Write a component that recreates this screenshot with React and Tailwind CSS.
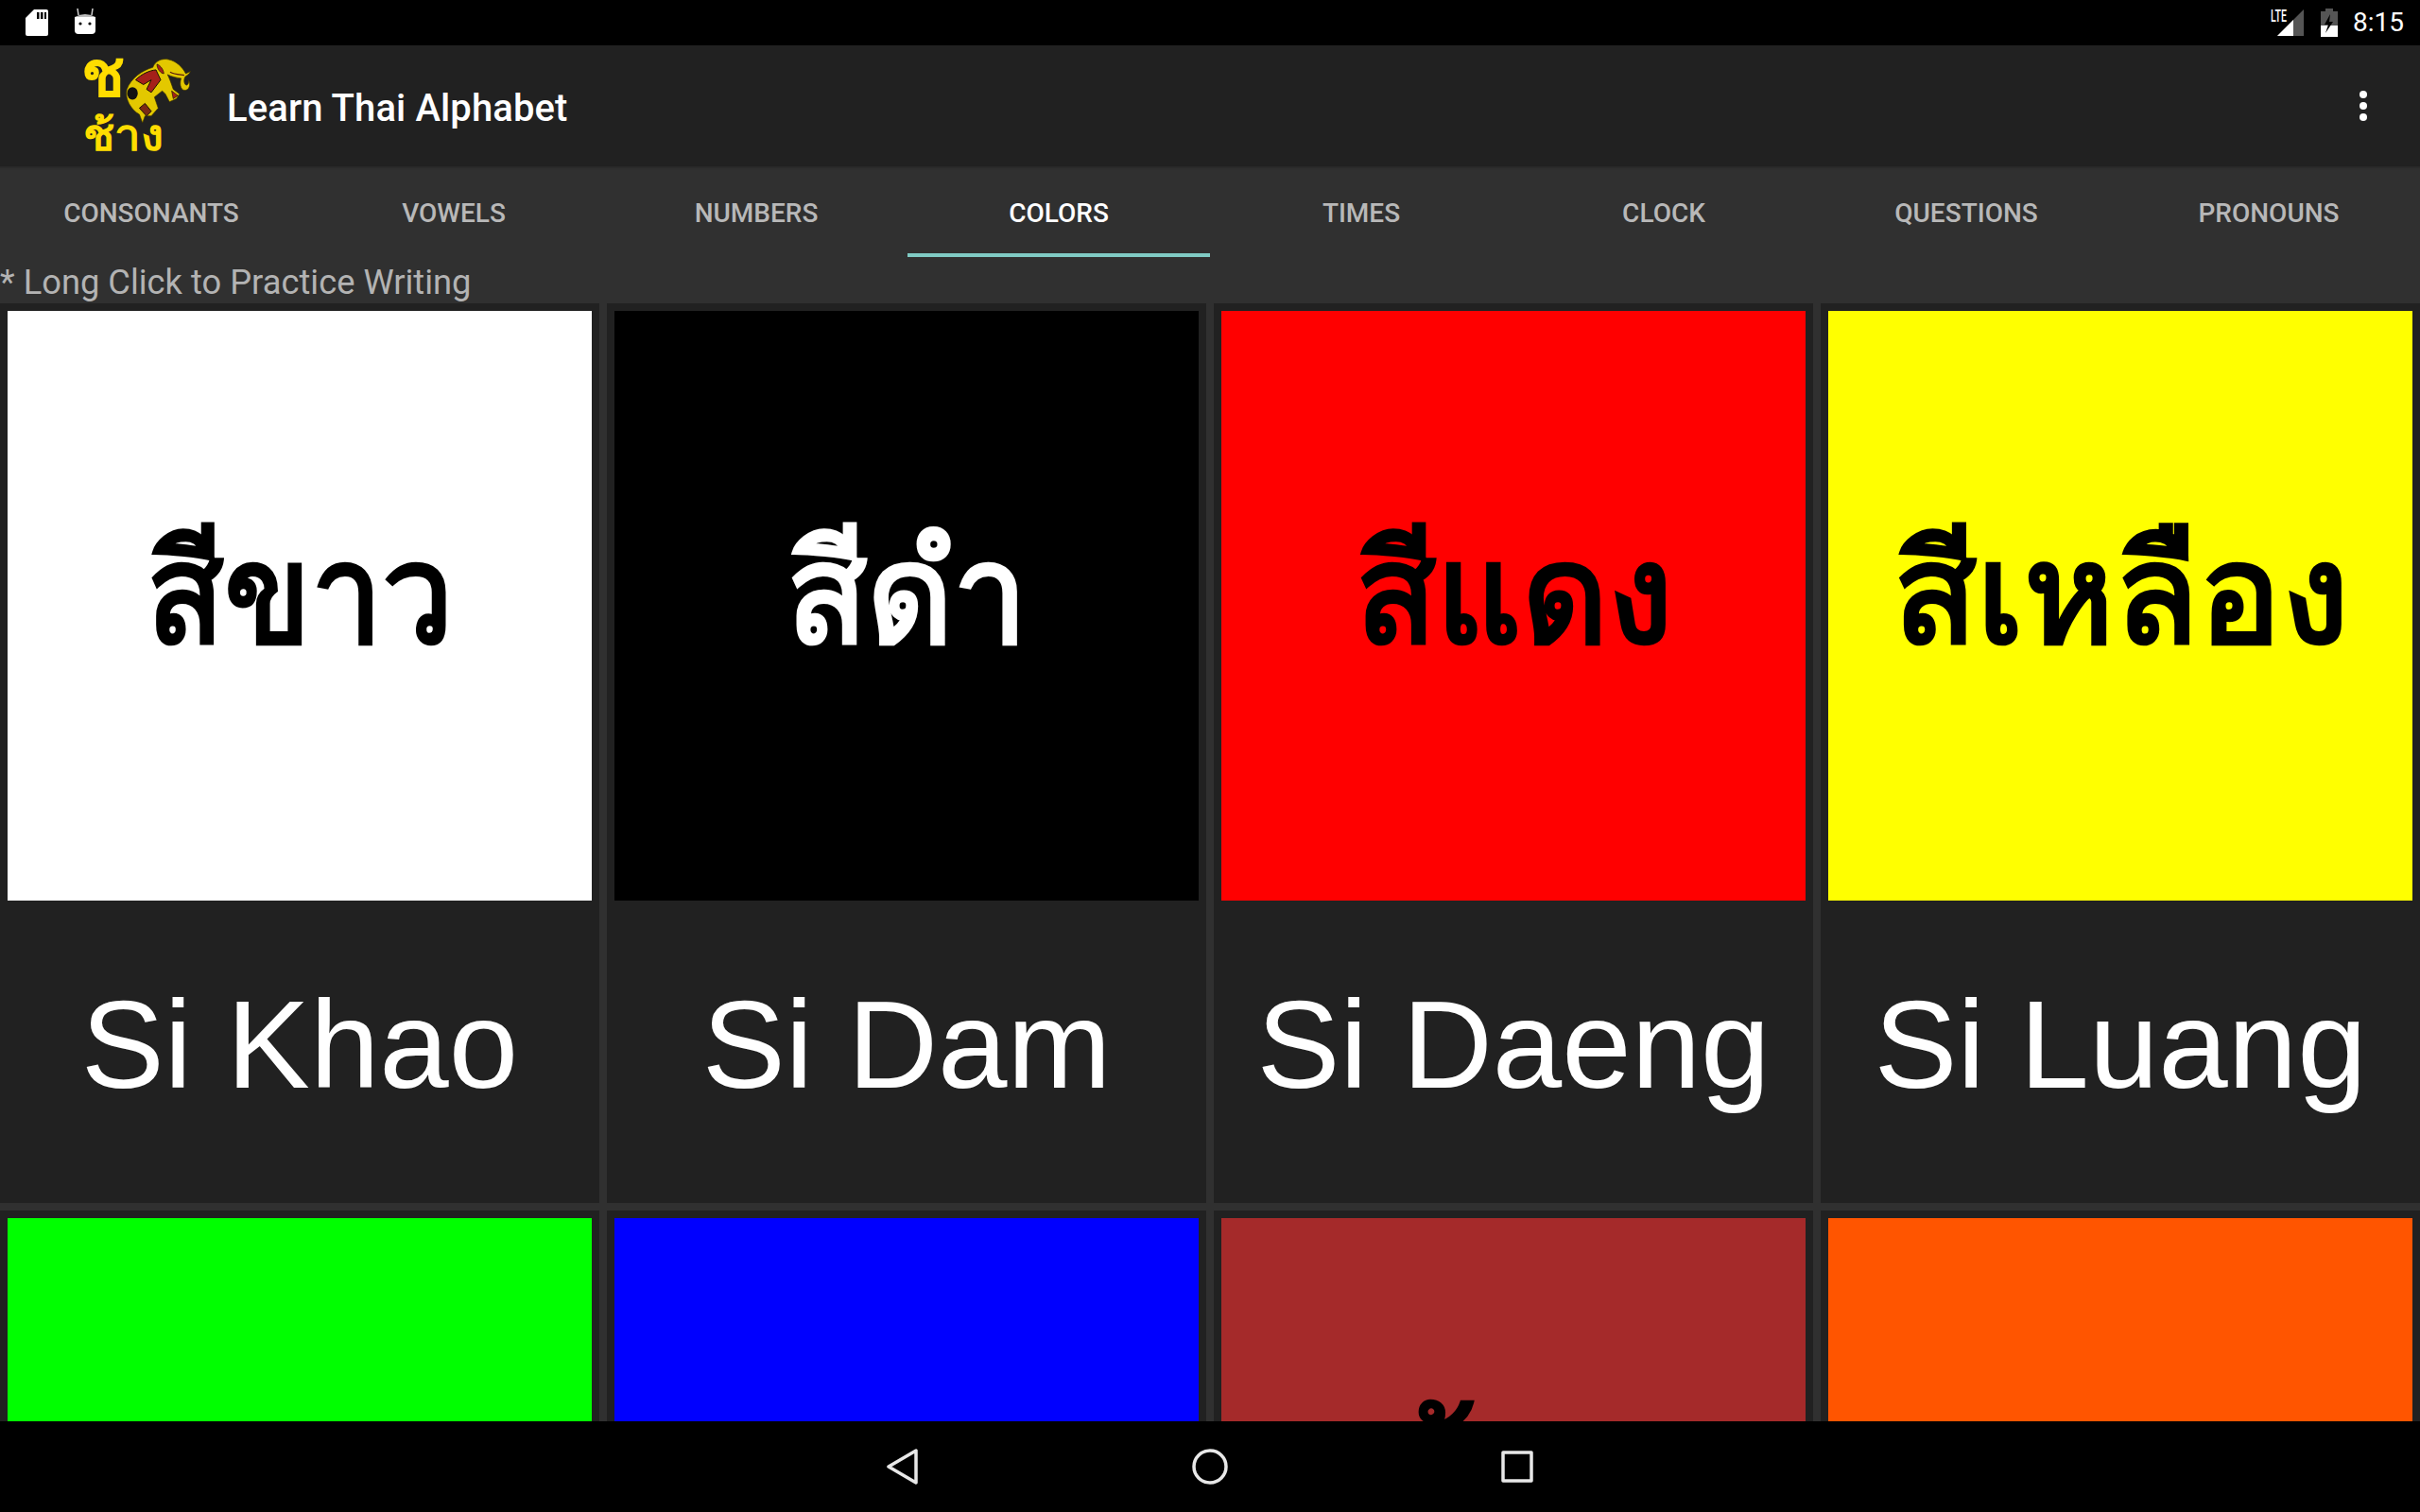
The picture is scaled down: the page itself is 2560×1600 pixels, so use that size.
import React from 'react';

const TABS = ['CONSONANTS', 'VOWELS', 'NUMBERS', 'COLORS', 'TIMES', 'CLOCK', 'QUESTIONS', 'PRONOUNS'];

const COLORS = [
  { thai: 'สีขาว', name: 'Si Khao', swatch: 'bg-white', ink: 'text-black', fit: 'scale-x-[0.91]' },
  { thai: 'สีดำ', name: 'Si Dam', swatch: 'bg-black', ink: 'text-white', fit: 'scale-x-[0.95]' },
  { thai: 'สีแดง', name: 'Si Daeng', swatch: 'bg-[#ff0000]', ink: 'text-black', fit: 'scale-x-[0.95]' },
  { thai: 'สีเหลือง', name: 'Si Luang', swatch: 'bg-[#ffff00]', ink: 'text-black', fit: 'scale-x-[0.98]' },
  { thai: 'สีเขียว', name: 'Si Khiao', swatch: 'bg-[#00ff00]', ink: 'text-black', fit: 'scale-x-100' },
  { thai: 'สีฟ้า', name: 'Si Fa', swatch: 'bg-[#0000ff]', ink: 'text-black', fit: 'scale-x-100' },
  { thai: 'สีน้ำตาล', name: 'Si Namtan', swatch: 'bg-[#a52a2a]', ink: 'text-black', fit: 'scale-x-100 translate-x-[40px]' },
  { thai: 'สีส้ม', name: 'Si Som', swatch: 'bg-[#ff5500]', ink: 'text-black', fit: 'scale-x-100' },
];

function StatusBar() {
  return (
    <div className="h-12 shrink-0 bg-black flex items-center text-white">
      <svg width="24" height="28" viewBox="0 0 24 28" className="ml-[27px]">
        <path d="M9 0h13a2 2 0 0 1 2 2v24a2 2 0 0 1-2 2H2a2 2 0 0 1-2-2V9z" fill="#fff" />
        <path d="M12 3h2.5v7H12zM16 3h2.5v7H16zM20 3h2v7h-2z" fill="#000" />
      </svg>
      <svg width="24" height="28" viewBox="0 0 24 28" className="ml-[27px] -mt-[2px]">
        <path d="M5 7 4 0M19 7l1-7" stroke="#cfcfcf" strokeWidth="1.5" />
        <path d="M1 9q11-6 22 0z" fill="#bdbdbd" />
        <path d="M1 9h22v14a4 4 0 0 1-4 4H5a4 4 0 0 1-4-4z" fill="#fff" />
        <circle cx="7" cy="16" r="1.6" fill="#000" />
        <circle cx="17" cy="16" r="1.6" fill="#000" />
      </svg>
      <div className="ml-auto flex items-center">
        <svg width="36" height="30" viewBox="0 0 36 30">
          <path d="M35 1v28H7z" fill="#555" />
          <path d="M24 12v17H7z" fill="#fff" />
          <text x="0" y="14" fontSize="18" fontWeight="500" fill="#fff" fontFamily="Roboto, sans-serif" textLength="17" lengthAdjust="spacingAndGlyphs">LTE</text>
        </svg>
        <svg width="20" height="30" viewBox="0 0 20 30" className="ml-[16px]">
          <path d="M6 0h8v3h5v27H1V3h5z" fill="#555" />
          <path d="M1 18h18v12H1z" fill="#fff" />
          <path d="M11 6 5 17h4l-3 9 8-12h-4z" fill="#000" />
        </svg>
        <span className="ml-[15px] mr-[17px] text-[28px] leading-none font-['Roboto',sans-serif]">8:15</span>
      </div>
    </div>
  );
}

function Logo() {
  return (
    <div className="relative w-[120px] h-[112px] ml-[84px]">
      <span className="absolute left-[2px] top-[-14px] text-[#ffdd00] text-[68px] leading-none font-bold font-['Noto_Sans',sans-serif]">ช</span>
      <span className="absolute left-[4px] top-[62px] origin-left scale-x-[1.07] text-[#ffdd00] text-[46px] leading-none font-bold font-['Noto_Sans',sans-serif]">ช้าง</span>
      <svg width="75" height="73" viewBox="210 55 225 220" className="absolute left-[46px] top-[2px]">
        <path
          d="M222 165C235 130 270 105 305 95C312 75 335 65 355 70C380 75 400 95 410 115L425 108C420 118 412 122 408 125C402 135 405 150 412 152C420 150 420 140 418 135C428 150 420 170 405 168C392 165 390 145 395 130C380 128 365 125 352 118C360 135 365 150 370 165L390 180L380 195L358 205L345 180L335 170L310 190L322 225L300 250L280 250L272 272L262 245C235 230 215 195 222 165Z"
          fill="#e3c800"
          stroke="#3a3000"
          strokeWidth="2"
        />
        <path d="M250 135C270 115 295 105 315 103L330 135L300 175L285 165L300 135L275 150Z" fill="#a5201a" stroke="#1a1400" strokeWidth="3" />
        <path d="M318 85C330 88 340 105 340 115C330 115 318 100 318 85Z" fill="#a5201a" stroke="#1a1400" strokeWidth="2" />
        <path d="M280 210L300 235L285 250L262 225Z" fill="#7a2a14" stroke="#1a1400" strokeWidth="3" />
        <path d="M365 170L385 185L370 195Z" fill="#a5201a" stroke="#1a1400" strokeWidth="2" />
        <path d="M360 110C375 118 395 118 405 120" fill="none" stroke="#5a1a10" strokeWidth="4" />
        <ellipse cx="240" cy="178" rx="17" ry="20" fill="#111" />
      </svg>
    </div>
  );
}

function AppBar() {
  return (
    <div className="h-32 shrink-0 bg-[#212121] flex items-center text-white">
      <Logo />
      <span className="ml-[36px] pt-[6px] text-[40px] tracking-[0.1px] font-medium leading-none font-['Roboto',sans-serif]">Learn Thai Alphabet</span>
      <div className="ml-auto mr-[56px] flex flex-col gap-1">
        <span className="w-2 h-2 rounded-full bg-white" />
        <span className="w-2 h-2 rounded-full bg-white" />
        <span className="w-2 h-2 rounded-full bg-white" />
      </div>
    </div>
  );
}

function Tabs() {
  return (
    <div className="h-24 shrink-0 grid grid-cols-8 font-['Roboto',sans-serif] text-[28px] font-medium shadow-[inset_0_4px_3px_-3px_rgba(0,0,0,0.25)]">
      {TABS.map((tab) => (
        <div
          key={tab}
          className={`flex items-center justify-center border-b-4 h-[96px] pt-[8px] ${tab === 'COLORS' ? 'border-[#80cbc4] text-white' : 'border-transparent text-[#b8b8b8]'}`}
        >
          {tab}
        </div>
      ))}
    </div>
  );
}

function ColorCard({ thai, name, swatch, ink, fit }) {
  return (
    <div className="bg-[#212121] px-2 pt-2 h-[952px] flex flex-col">
      <div className={`${swatch} ${ink} h-[624px] shrink-0 flex items-center justify-center pb-[24px] font-['Liberation_Sans',sans-serif] font-bold text-[148px] leading-none`}>
        <span className={fit}>{thai}</span>
      </div>
      <div className="flex-1 flex items-center justify-center text-white font-['Liberation_Sans',sans-serif] text-[132px] leading-none pb-[14px]">
        {name}
      </div>
    </div>
  );
}

export default function App() {
  return (
    <div className="w-[2560px] h-[1600px] flex flex-col bg-[#303030] overflow-hidden">
      <StatusBar />
      <AppBar />
      <Tabs />
      <div className="h-[49px] shrink-0 text-[36.3px] leading-[53px] text-[#b3b3b3] font-['Roboto',sans-serif]">* Long Click to Practice Writing</div>
      <div className="flex-1 min-h-0 overflow-hidden">
        <div className="grid grid-cols-4 gap-2">
          {COLORS.map((c) => (
            <ColorCard key={c.name} {...c} />
          ))}
        </div>
      </div>
      <div className="h-24 shrink-0 bg-black flex items-center justify-center gap-[289px]">
        <svg width="34" height="38" viewBox="0 0 34 38" fill="none" stroke="#e8e8e8" strokeWidth="3.5" strokeLinejoin="round">
          <path d="M31 2v34L2 19z" />
        </svg>
        <svg width="38" height="38" viewBox="0 0 38 38" fill="none" stroke="#e8e8e8" strokeWidth="3.5">
          <circle cx="19" cy="19" r="17" />
        </svg>
        <svg width="34" height="34" viewBox="0 0 34 34" fill="none" stroke="#e8e8e8" strokeWidth="3.5" strokeLinejoin="round">
          <rect x="2" y="2" width="30" height="30" />
        </svg>
      </div>
    </div>
  );
}
